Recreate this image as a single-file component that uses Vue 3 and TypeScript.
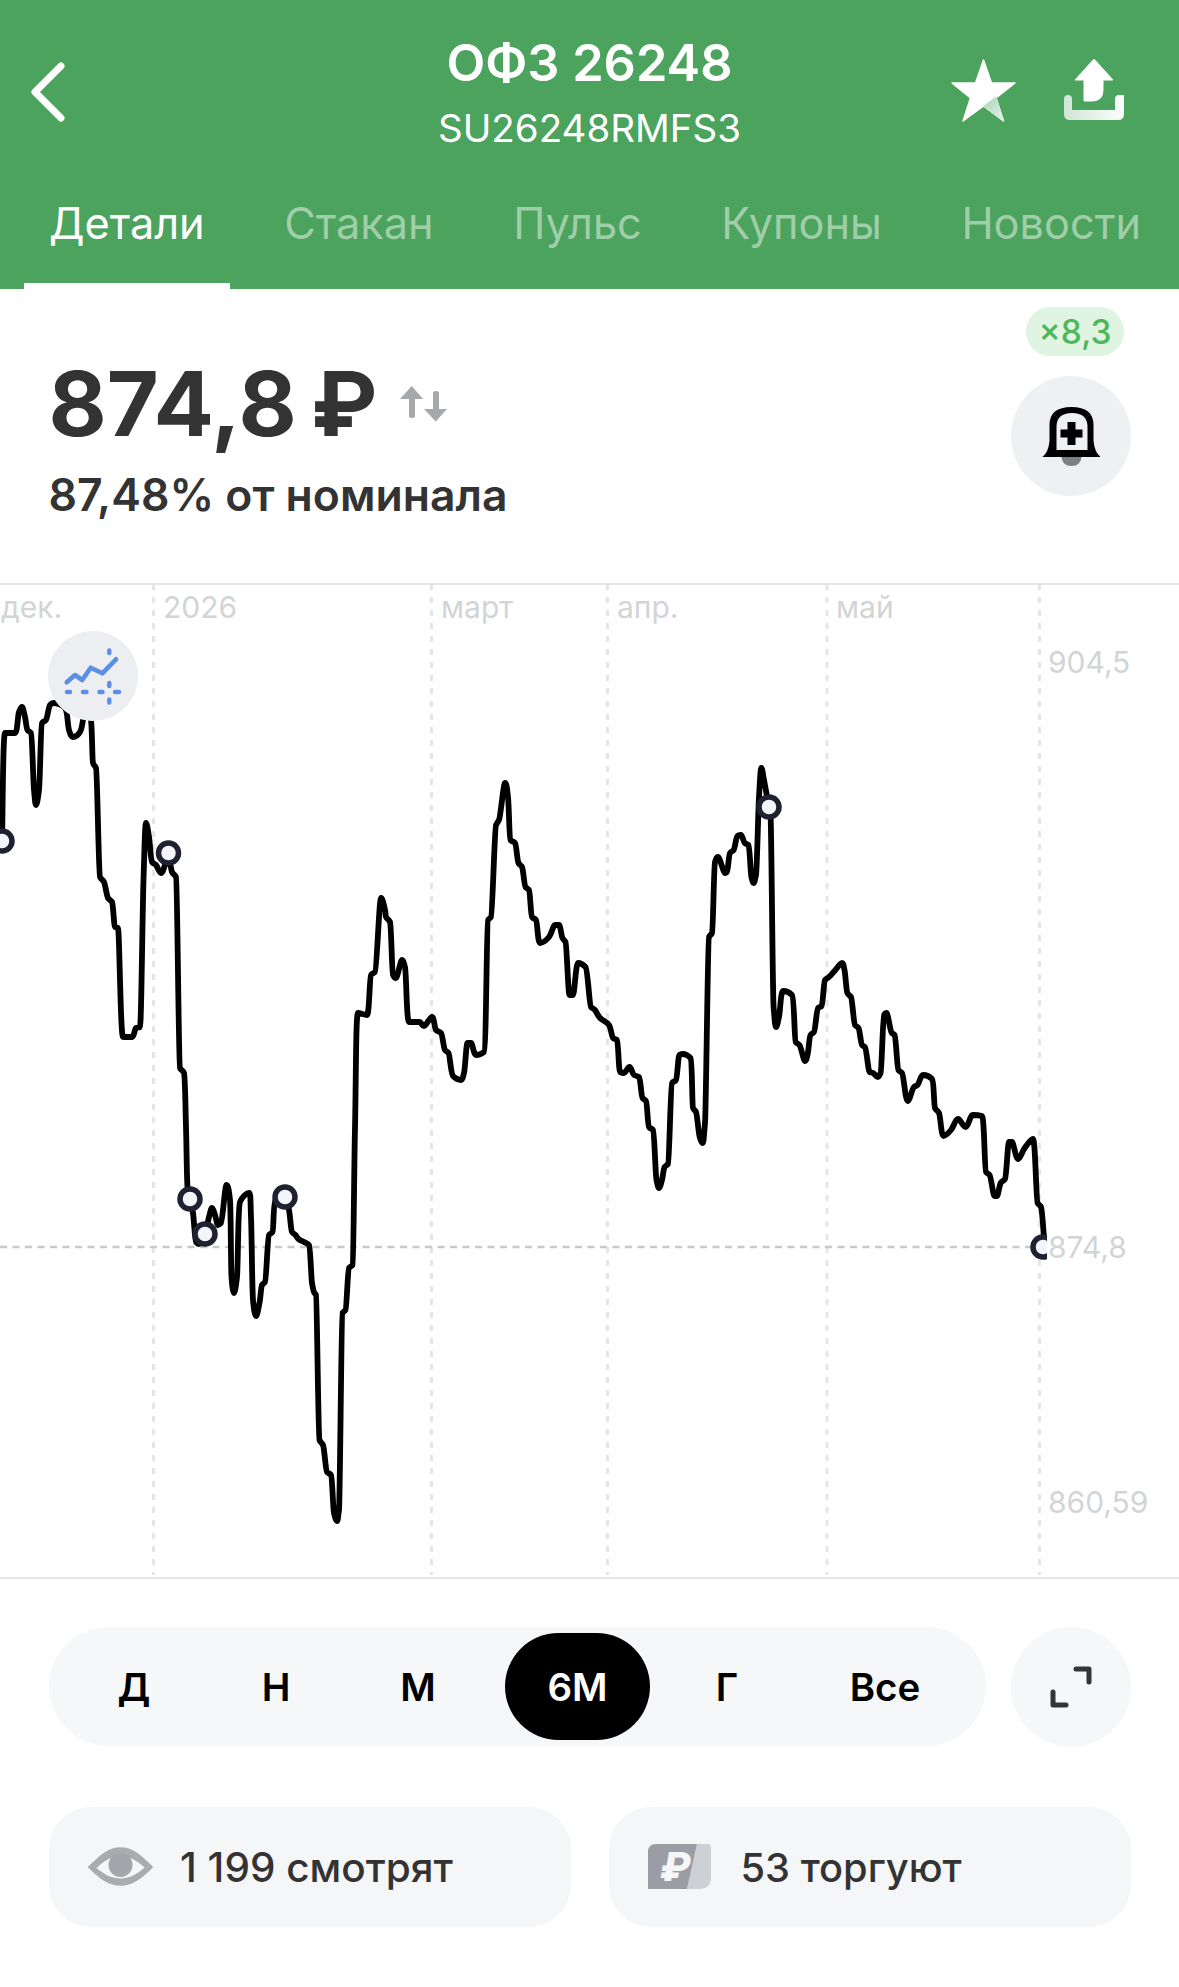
<script setup lang="ts">
const tabs = ['Детали', 'Стакан', 'Пульс', 'Купоны', 'Новости']
const periods = ['Д', 'Н', 'М', '6М', 'Г', 'Все']
const raw = `2,840 5,733 15,733 19,712 22,707 25,717 27.5,730 31,733 34,790 36,805 39,790 42,723 46,720 50,705 54,703 65,708 69,730 73,737 80,732 83,720 86,700 91,720 93,763 96,768 100,877 104,882 108,898 112,902 115,927 118,928 123,1037 132,1037 136,1028 140,1027 143.5,880 146,823 149,837 152,862 156,865 161,873 165,865 168,853 172,872 176,877 180,1068 184,1073 186,1127 187.5,1187 190,1199 193,1213 196,1242 199,1244 205,1234 209,1217 212,1208 215,1215 218,1225 221,1223 226.5,1185 230,1200 231.5,1277 234,1293 237,1277 240,1202 249,1193 251,1217 253,1300 256,1316 259.5,1303 262,1285 265,1282 269,1235 272.5,1232 275.5,1200 285,1197 289,1210 292,1232 295.5,1235 298.5,1239 304,1242 309,1245 312,1283 314,1292 316,1295 319.5,1440 323,1445 327,1472 331,1475 334,1513 337,1521 339,1510 342.5,1313 345.5,1310 349,1268 352.5,1265 355,1128 358,1013 367,1015 371,975 375,972 381,898 385,910 386,917 390,922 393,975 396,978 402,960 405,967 409,1022 419,1022 424,1026 432,1017 436,1030 441,1033 445,1050 448.5,1053 453,1076 461,1080 464,1073 467.5,1043 471,1043 476,1055 484,1052 488,920 491,917 496,825 499,820 505,783 508,797 510.5,840 515,843 518.5,863 522,867 525.5,887 529,890 532,917 536,920 540,943 549,937 555,925 559,925 562.5,938 565.5,942 569.5,995 573,995 578,963 585.5,967 591,1007 595,1010 600,1018 609,1025 613,1038 617,1040 620,1072 624,1073 629.5,1067 634,1075 639,1077 642.5,1098 646,1101 649,1127 653,1130 656.5,1180 659,1188 662,1180 664.6,1167 668,1164 672,1083 676,1080 679.4,1055 683,1054 690.5,1058 693,1108 696,1112 699.7,1137 702.7,1143 705,1123 709,937 712,933 715,862 718,857 725,873 727,872 730,853 733.7,850 737.4,836 741,835 744.8,843 748.5,845 751.4,877 753.6,883 756,875 759,797 761.4,768 764,780 769,807 770.6,817 773.6,1007 776,1027 779,1017 783,991 792,995 795.7,1042 799.4,1045 805,1061 807.5,1055 810.5,1035 814,1032 818,1008 821.6,1006 825,980 829,977 834.5,971 842,963 844.5,970 847.4,993 851,997 855,1025 858.5,1028 862,1045 865,1047 869.6,1072 873,1073 877.7,1077 880.6,1073 884,1015 886.6,1013 891.7,1033 894.7,1035 898.4,1070 902,1073 907.6,1101 914,1087 917.6,1085 923,1075 932,1079 935,1108 939,1113 943.4,1136 951,1130 958,1119 965.6,1127 973,1115 982,1116 986,1172 989.6,1175 994.4,1196 997,1196 1000.7,1183 1005,1179 1009,1142 1012,1142 1018,1159 1024.7,1148 1033,1139 1037.6,1203 1041,1207 1044,1237 1045,1247`
const pts = raw.split(' ').map((s) => s.split(',').map(Number))
const k = 0.18
const tangents = pts.map((p, i) => {
  const a = pts[Math.max(i - 1, 0)]
  const b = pts[Math.min(i + 1, pts.length - 1)]
  const d0 = p[1] - a[1]
  const d1 = b[1] - p[1]
  let ty = (b[1] - a[1]) * k
  if (d0 * d1 <= 0) ty = 0
  else {
    const lim = Math.min(Math.abs(d0), Math.abs(d1)) * 0.6
    ty = Math.max(-lim, Math.min(lim, ty))
  }
  return [(b[0] - a[0]) * k, ty]
})
let linePath = `M${pts[0][0]} ${pts[0][1]}`
for (let i = 0; i < pts.length - 1; i++) {
  const p1 = pts[i]
  const p2 = pts[i + 1]
  const t1 = tangents[i]
  const t2 = tangents[i + 1]
  linePath += `C${(p1[0] + t1[0]).toFixed(1)} ${(p1[1] + t1[1]).toFixed(1)} ${(p2[0] - t2[0]).toFixed(1)} ${(p2[1] - t2[1]).toFixed(1)} ${p2[0]} ${p2[1]}`
}
const grid = [153.5, 431.5, 607.5, 827, 1039.5]
const months = [
  { t: 'дек.', x: 1 },
  { t: '2026', x: 163 },
  { t: 'март', x: 441 },
  { t: 'апр.', x: 617 },
  { t: 'май', x: 836 },
]
const prices = [
  { t: '904,5', y: 673 },
  { t: '874,8', y: 1258 },
  { t: '860,59', y: 1513 },
]
const markers = [
  [2, 841],
  [168.5, 853],
  [190, 1199],
  [205, 1234],
  [285, 1197],
  [769, 807],
]
</script>

<template>
  <div class="page">
    <header class="head">
      <div class="top">
        <svg class="back" width="40" height="64" viewBox="0 0 40 64">
          <path d="M33 6 L7 32 L33 58" fill="none" stroke="#fff" stroke-width="7" stroke-linecap="round" stroke-linejoin="round" />
        </svg>
        <div class="titles">
          <div class="title">ОФЗ 26248</div>
          <div class="sub">SU26248RMFS3</div>
        </div>
        <div class="actions">
          <svg width="67" height="66" viewBox="0 0 67 66">
            <defs>
              <linearGradient id="leg" x1="0" y1="0" x2="1" y2="1">
                <stop offset="0" stop-color="#a9d6b6" />
                <stop offset="1" stop-color="#e4f2e8" />
              </linearGradient>
            </defs>
            <path d="M33.5 2 L41.5 25 L65 25 L46 40 L53.5 63 L33.5 48 L13 63 L20.5 40 L2 25 L25.5 25 Z" fill="#fff" stroke="#fff" stroke-width="1.5" stroke-linejoin="round" />
            <path d="M34 48 L46 39 L53.5 63 Z" fill="url(#leg)" stroke="url(#leg)" stroke-width="1" stroke-linejoin="round" />
          </svg>
          <svg width="62" height="64" viewBox="0 0 62 64">
            <defs>
              <linearGradient id="tray" x1="0" y1="0" x2="1" y2="0">
                <stop offset="0" stop-color="#cfe6d6" />
                <stop offset="1" stop-color="#fbfdfb" />
              </linearGradient>
            </defs>
            <path d="M31 1 L50 22 L40 22 L40 32 Q40 43 29 43 L21 43 L21 22 L12 22 Z" fill="#fff" stroke="#fff" stroke-width="1" stroke-linejoin="round" />
            <path d="M1 41 Q1 37 5 37 Q9 37 9 41 L9 52 L52 52 L52 41 Q52 37 56 37 L61 37 L61 56 Q61 62 55 62 L7 62 Q1 62 1 56 Z" fill="url(#tray)" />
          </svg>
        </div>
      </div>
      <nav class="tabs">
        <div v-for="(t, i) in tabs" :key="t" class="tab" :class="{ on: i === 0 }">{{ t }}</div>
      </nav>
    </header>

    <section class="quote">
      <div class="q-left">
        <div class="price-row">
          <span class="price">874,8 ₽</span>
          <svg class="swap" width="48" height="36" viewBox="0 0 48 36">
            <path d="M11.7 0 L23 13 L15 13 L15 31 Q12 33 9 31 L9 13 L0 13 Z" fill="#a6a8ab" />
            <path d="M33 6 Q36 4 39 6 L39 23 L47 23 L35.7 35.5 L24 23 L33 23 Z" fill="#a6a8ab" />
          </svg>
        </div>
        <div class="nominal">87,48% от номинала</div>
      </div>
      <div class="q-right">
        <div class="pill">×8,3</div>
        <div class="bell">
          <svg width="60" height="62" viewBox="-1.5 0 60 62">
            <path d="M19 52 Q20 61 29 61 Q38 61 39 52 Z" fill="#7d7f82" />
            <path d="M0 52 Q6 47 7 36 L7 20 Q7 2 29 2 Q51 2 51 20 L51 36 Q52 47 58 52 Z" fill="#000" />
            <path d="M14 45 L14 22 Q14 8 29.5 8 Q45 8 45 22 L45 45 Z" fill="#eef0f2" />
            <path d="M25 17 L33 17 L33 24.5 L40 24.5 L40 32.5 L33 32.5 L33 40 L25 40 L25 32.5 L18 32.5 L18 24.5 L25 24.5 Z" fill="#000" />
          </svg>
        </div>
      </div>
    </section>

    <section class="chart">
      <svg class="plot" width="1179" height="996" viewBox="0 583 1179 996">
        <defs>
          <clipPath id="plotclip"><rect x="0" y="583" width="1047" height="995" /></clipPath>
        </defs>
        <line v-for="x in grid" :key="x" :x1="x" :x2="x" y1="584" y2="1575" stroke="#e4e5e6" stroke-width="3" stroke-dasharray="6 7" />
        <line x1="0" x2="1040" y1="1247" y2="1247" stroke="#c9c9c9" stroke-width="2.5" stroke-dasharray="7 5.5" />
        <text v-for="m in months" :key="m.t" :x="m.x" y="618" class="axis">{{ m.t }}</text>
        <text v-for="p in prices" :key="p.t" x="1048" :y="p.y" class="axis">{{ p.t }}</text>
        <g clip-path="url(#plotclip)">
          <path :d="linePath" fill="none" stroke="#000" stroke-width="5.8" stroke-linejoin="round" stroke-linecap="round" />
          <circle v-for="(c, i) in markers" :key="i" :cx="c[0]" :cy="c[1]" r="10" fill="#f3f5fa" stroke="#1e2230" stroke-width="5.5" />
          <circle cx="1043" cy="1247" r="10" fill="#f3f5fa" stroke="#1e2230" stroke-width="5.5" />
        </g>
      </svg>
      <div class="trend">
        <svg width="90" height="90" viewBox="48 631 90 90">
          <path d="M66.7 682.3 L75 675 L82.3 680 L90.7 667.7 L102.3 673.3 L116 659.3" fill="none" stroke="#5b8fe6" stroke-width="4.6" stroke-linecap="round" stroke-linejoin="round" />
          <path d="M67 692 H70 M83 692 H86.5 M99.5 692 H102.5 M115 692 H119 M109.3 650.5 V653 M109.3 683 V686 M109.3 699.5 V702.5" fill="none" stroke="#5b8fe6" stroke-width="4.4" stroke-linecap="round" />
        </svg>
      </div>
    </section>

    <section class="controls">
      <div class="seg">
        <div v-for="p in periods" :key="p" class="seg-item" :class="{ active: p === '6М', g: p === 'Г', all: p === 'Все' }">{{ p }}</div>
      </div>
      <div class="expand">
        <svg width="44" height="44" viewBox="0 0 44 44">
          <path d="M27 4 L40 4 L40 17 M4 27 L4 40 L17 40" fill="none" stroke="#333538" stroke-width="5" stroke-linecap="round" stroke-linejoin="round" />
        </svg>
      </div>
    </section>

    <section class="stats">
      <div class="stat">
        <svg width="67" height="42" viewBox="0 0 67 42">
          <path d="M0.7 21.3 C14 8 22 1.3 33.5 1.3 C45 1.3 53 8 66.3 21.3 C53 34 45 39.7 33.5 39.7 C22 39.7 14 34 0.7 21.3 Z" fill="#a9abae" />
          <path d="M9.5 22 C18 14 25 10 33.5 10 C42 10 49 14 57.5 21.5 C49 29 42 32.5 33.5 32.5 C25 32.5 18 29 9.5 22 Z" fill="#f5f6f8" />
          <circle cx="33.5" cy="19" r="12" fill="#a3a7ac" />
        </svg>
        <span class="stat-t">1 199 смотрят</span>
      </div>
      <div class="stat right">
        <svg width="64" height="46" viewBox="0 0 64 46">
          <path d="M49 0 L60 0 Q63 0 63 3 L63 33 Q63 45 51 45 L39 45 Z" fill="#cdd0d5" />
          <path d="M8 0 L49 0 L39 45 L0 45 L0 8 Q0 0 8 0 Z" fill="#9a9ea4" />
          <text x="12" y="37" class="rub">₽</text>
        </svg>
        <span class="stat-t small">53 торгуют</span>
      </div>
    </section>
  </div>
</template>

<style scoped>
.page {
  width: 1179px;
  height: 1987px;
  background: #fff;
  font-family: Inter, "Noto Sans", sans-serif;
  overflow: hidden;
}
.head {
  background: #4ba35e;
  height: 289px;
  display: flex;
  flex-direction: column;
}
.top {
  height: 193px;
  display: grid;
  grid-template-columns: 1fr auto 1fr;
  align-items: start;
  padding: 33px 28px 0;
  box-sizing: border-box;
}
.back { margin-top: 27px; }
.titles {
  text-align: center;
  color: #fff;
}
.title {
  font-size: 50.5px;
  font-weight: 600;
  line-height: 60px;
}
.sub {
  font-size: 38.5px;
  line-height: 46px;
  margin-top: 12px;
}
.actions {
  display: flex;
  gap: 46px;
  margin-top: 25px;
  margin-right: 26px;
  justify-self: end;
}
.tabs {
  display: flex;
  gap: 29.5px;
  padding-left: 24px;
  flex: 1;
}
.tab {
  padding: 5px 25px 0;
  font-size: 43.3px;
  line-height: 50px;
  color: rgba(255, 255, 255, 0.47);
  border-bottom: 6px solid transparent;
  height: 96px;
  box-sizing: border-box;
  white-space: nowrap;
}
.tab.on {
  color: #fff;
  border-bottom-color: #fff;
}
.quote {
  height: 294px;
  display: flex;
  justify-content: space-between;
  padding: 18px 48px 0 48.5px;
  box-sizing: border-box;
}
.q-left { padding-top: 45px; }
.price-row {
  display: flex;
  align-items: center;
  gap: 23px;
}
.price {
  font-size: 89.5px;
  font-weight: 700;
  line-height: 104px;
  color: #333;
  word-spacing: -7px;
}
.nominal {
  font-size: 44.5px;
  font-weight: 600;
  line-height: 50px;
  color: #333;
  margin-top: 14px;
}
.q-right {
  display: flex;
  flex-direction: column;
  align-items: flex-end;
}
.pill {
  width: 98px;
  height: 49px;
  margin-right: 7px;
  border-radius: 25px;
  background: #dff4e1;
  color: #4db85b;
  font-size: 33.5px;
  font-weight: 500;
  display: flex;
  align-items: center;
  justify-content: center;
}
.bell {
  width: 120px;
  height: 120px;
  border-radius: 50%;
  background: #eef0f2;
  margin-top: 20px;
  display: flex;
  align-items: center;
  justify-content: center;
}
.chart {
  height: 996px;
  position: relative;
  border-top: 2px solid #e6e6e6;
  border-bottom: 2px solid #e6e6e6;
  box-sizing: border-box;
}
.plot {
  position: absolute;
  left: 0;
  top: -2px;
}
.axis {
  font-family: Inter, "Noto Sans", sans-serif;
  font-size: 30px;
  fill: #d3d4d6;
}
.trend {
  position: absolute;
  left: 48px;
  top: 46px;
  width: 90px;
  height: 90px;
  border-radius: 50%;
  background: #eceef1;
}
.trend svg { display: block; }
.controls {
  display: flex;
  justify-content: space-between;
  padding: 48px 48px 0 49px;
}
.seg {
  width: 937px;
  height: 119px;
  border-radius: 60px;
  background: #f6f7f8;
  display: flex;
  align-items: center;
  padding-left: 14px;
  box-sizing: border-box;
}
.seg-item {
  width: 142px;
  height: 107px;
  display: flex;
  align-items: center;
  justify-content: center;
  font-size: 38.5px;
  font-weight: 600;
  color: #000;
}
.seg-item.g { width: 154px; }
.seg-item.all { width: 162px; }
.seg-item.active {
  width: 145px;
  margin-left: 16px;
  border-radius: 54px;
  background: #000;
  color: #fff;
}
.expand {
  width: 120px;
  height: 120px;
  border-radius: 50%;
  background: #f6f7f8;
  display: flex;
  align-items: center;
  justify-content: center;
}
.stats {
  display: flex;
  gap: 38px;
  padding: 60px 48px 0 49px;
}
.stat {
  flex: 1;
  height: 120px;
  border-radius: 42px;
  background: #f5f6f8;
  display: flex;
  align-items: center;
  padding-left: 38px;
  gap: 26px;
  box-sizing: border-box;
}
.stat.right { padding-left: 39px; gap: 29px; }
.stat-t {
  font-size: 40.5px;
  font-weight: 500;
  color: #333;
}
.stat-t.small { font-size: 39.8px; }
.rub {
  font-family: Inter, sans-serif;
  font-size: 40px;
  font-weight: 800;
  font-style: italic;
  fill: #f5f6f8;
}
</style>
